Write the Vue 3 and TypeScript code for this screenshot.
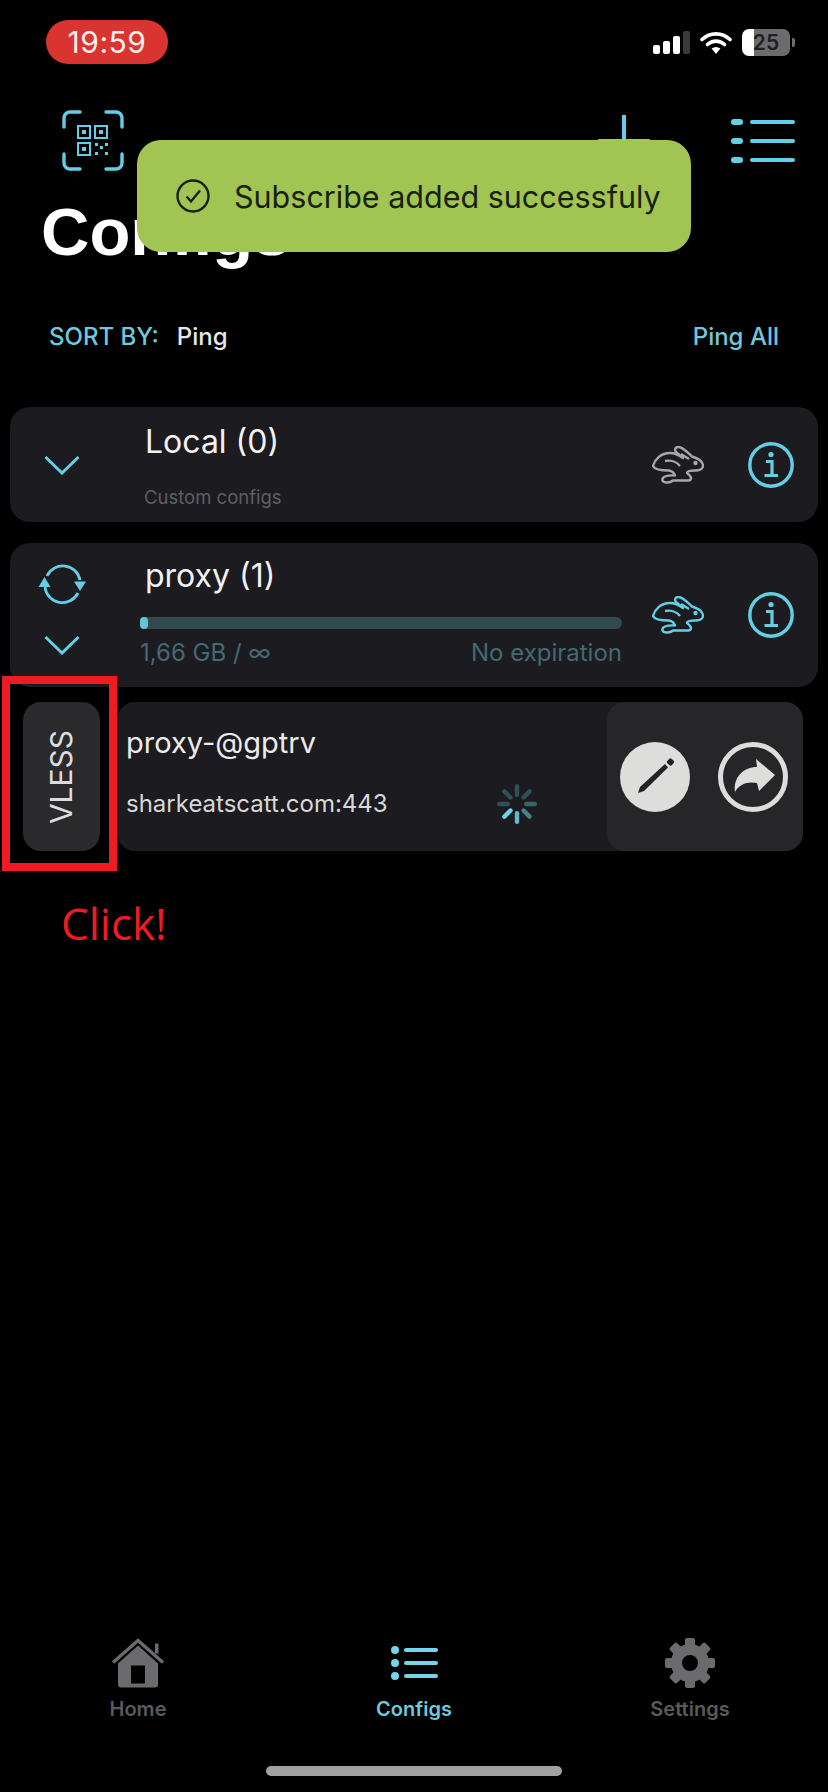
<script setup lang="ts">
const spinnerTicks = [
  { angle: 0, color: '#2f5058' },
  { angle: 45, color: '#2f5058' },
  { angle: 90, color: '#3a626b' },
  { angle: 135, color: '#4a7f8b' },
  { angle: 180, color: '#62b9cc' },
  { angle: 225, color: '#6fd3e8' },
  { angle: 270, color: '#2f5058' },
  { angle: 315, color: '#2f5058' },
];

const gearTeeth = [0, 45, 90, 135, 180, 225, 270, 315];

const rabbitPath =
  'M1 20C3 13 9 7 18 7 23 7 27 9 31 12L24.5 6.5C22 4 23 1 26.5 1 31 1 36 7 40 10.5 45 12 51 15 51 20 51 23 47 24.5 43 24.5 39 24.5 35 25 35 27 37 29 39 30 39 32 39 34 38 34.5 36 34.5L21 34.5C18 37 12 37.5 10.5 34.5 9.5 31 14 29 23 29.5 22 27 20 25 17 24.5 10 24.5 3 24 1 20Z';
</script>

<template>
  <div class="screen">
    <div class="status">
      <div class="time">19:59</div>
      <div class="status-icons">
        <svg width="37" height="23" viewBox="0 0 37 23">
          <rect x="0" y="14" width="7" height="9" rx="2" fill="#fff" />
          <rect x="10" y="10" width="7" height="13" rx="2" fill="#fff" />
          <rect x="20" y="5" width="7" height="18" rx="2" fill="#fff" />
          <rect x="30" y="0" width="7" height="23" rx="2" fill="#3a3a3c" />
        </svg>
        <svg class="wifi" width="32" height="23" viewBox="0 0 32 23">
          <path d="M2 8.5C10 1 22 1 30 8.5" fill="none" stroke="#fff" stroke-width="3.6" stroke-linecap="round" />
          <path d="M7.5 13.5C12.5 9 19.5 9 24.5 13.5" fill="none" stroke="#fff" stroke-width="3.6" stroke-linecap="round" />
          <path d="M11.5 17.5Q16 14.5 20.5 17.5L16 23Z" fill="#fff" />
        </svg>
        <div class="battery"><span>25</span></div>
        <div class="battery-nub"></div>
      </div>
    </div>

    <div class="toolbar">
      <svg width="62" height="61" viewBox="0 0 62 61" fill="none">
        <g stroke="#63cfe6" stroke-width="3.4" stroke-linecap="round">
          <path d="M2 17V8a6 6 0 0 1 6-6h10" />
          <path d="M44 2h10a6 6 0 0 1 6 6v9" />
          <path d="M2 44v9a6 6 0 0 0 6 6h10" />
          <path d="M60 44v9a6 6 0 0 1-6 6H44" />
        </g>
        <g stroke="#63cfe6" stroke-width="2">
          <rect x="16" y="16" width="12" height="12" />
          <rect x="33" y="16" width="12" height="12" />
          <rect x="16" y="33" width="12" height="12" />
        </g>
        <g fill="#63cfe6">
          <rect x="20" y="20" width="4" height="4" />
          <rect x="37" y="20" width="4" height="4" />
          <rect x="20" y="37" width="4" height="4" />
          <rect x="33" y="33" width="3" height="3" />
          <rect x="38" y="36" width="3" height="3" />
          <rect x="43" y="33" width="3" height="3" />
          <rect x="33" y="42" width="3" height="3" />
          <rect x="43" y="42" width="3" height="3" />
        </g>
      </svg>
      <svg class="plus" width="52" height="52" viewBox="0 0 52 52">
        <path d="M26 1V51M1 26H51" stroke="#63cfe6" stroke-width="4" stroke-linecap="round" />
      </svg>
      <svg width="64" height="44" viewBox="0 0 64 44">
        <g fill="#63cfe6">
          <rect x="0" y="0" width="12" height="6" rx="3" />
          <rect x="0" y="19" width="12" height="6" rx="3" />
          <rect x="0" y="38" width="12" height="6" rx="3" />
          <rect x="19" y="1" width="45" height="4" rx="2" />
          <rect x="19" y="20" width="45" height="4" rx="2" />
          <rect x="19" y="39" width="45" height="4" rx="2" />
        </g>
      </svg>
    </div>

    <h1 class="title">Configs</h1>

    <div class="sort">
      <span class="sort-label">SORT BY:</span>
      <span class="sort-value">Ping</span>
      <span class="ping-all">Ping All</span>
    </div>

    <div class="list">
      <section class="card card-local">
        <div class="card-left">
          <svg width="36" height="20" viewBox="0 0 36 20">
            <path d="M1.5 2 18 18 34.5 2" fill="none" stroke="#63cfe6" stroke-width="3" />
          </svg>
        </div>
        <div class="card-main">
          <div class="card-title">Local (0)</div>
          <div class="card-sub">Custom configs</div>
        </div>
        <svg class="rabbit" width="52" height="38" viewBox="0 0 52 38" fill="none" stroke="#a9a7a7" stroke-width="2.4" stroke-linejoin="round">
          <path :d="rabbitPath" />
          <path d="M29 8 37 13" />
          <path d="M13 15C19 14 25 16 28 20" />
          <circle cx="43.5" cy="17" r="1" fill="#a9a7a7" />
        </svg>
        <svg class="info" width="46" height="46" viewBox="0 0 46 46" fill="none">
          <circle cx="23" cy="23" r="21.2" stroke="#63cfe6" stroke-width="3.4" />
          <circle cx="23" cy="12.5" r="2.6" fill="#63cfe6" />
          <path d="M18 19.5H24V33M16.5 33.5H30" stroke="#63cfe6" stroke-width="3.2" />
        </svg>
      </section>

      <section class="card card-proxy">
        <div class="card-left card-left-stack">
          <svg width="48" height="41" viewBox="0 0 48 41" fill="none">
            <path d="M9 13A17.5 17.5 0 0 1 42 17" stroke="#63cfe6" stroke-width="2.8" />
            <path d="M40 30A17.5 17.5 0 0 1 7 24" stroke="#63cfe6" stroke-width="2.8" />
            <path d="M0.5 24 6.5 14 12.5 24Z" fill="#63cfe6" />
            <path d="M36 18.5H48L42 28Z" fill="#63cfe6" />
          </svg>
          <svg width="36" height="20" viewBox="0 0 36 20">
            <path d="M1.5 2 18 18 34.5 2" fill="none" stroke="#63cfe6" stroke-width="3" />
          </svg>
        </div>
        <div class="card-main card-main-proxy">
          <div class="card-title">proxy (1)</div>
          <div class="bar"><div class="bar-fill"></div></div>
          <div class="usage">
            <span>1,66 GB / ∞</span>
            <span>No expiration</span>
          </div>
        </div>
        <svg class="rabbit" width="52" height="38" viewBox="0 0 52 38" fill="none" stroke="#63cfe6" stroke-width="2.4" stroke-linejoin="round">
          <path :d="rabbitPath" />
          <path d="M29 8 37 13" />
          <path d="M13 15C19 14 25 16 28 20" />
          <circle cx="43.5" cy="17" r="1" fill="#63cfe6" />
        </svg>
        <svg class="info" width="46" height="46" viewBox="0 0 46 46" fill="none">
          <circle cx="23" cy="23" r="21.2" stroke="#63cfe6" stroke-width="3.4" />
          <circle cx="23" cy="12.5" r="2.6" fill="#63cfe6" />
          <path d="M18 19.5H24V33M16.5 33.5H30" stroke="#63cfe6" stroke-width="3.2" />
        </svg>
      </section>

      <div class="config-row">
        <div class="protocol"><span>VLESS</span></div>
        <div class="config">
          <div class="config-info">
            <div class="config-name">proxy-@gptrv</div>
            <div class="config-addr">
              <span>sharkeatscatt.com:443</span>
              <svg width="40" height="40" viewBox="0 0 40 40">
                <rect
                  v-for="tick in spinnerTicks"
                  :key="tick.angle"
                  x="17.8"
                  y="0"
                  width="4.4"
                  height="13"
                  rx="2.2"
                  :fill="tick.color"
                  :transform="`rotate(${tick.angle} 20 20)`"
                />
              </svg>
            </div>
          </div>
          <div class="actions">
            <svg width="70" height="70" viewBox="0 0 70 70">
              <circle cx="35" cy="35" r="35" fill="#dddddb" />
              <path d="M18 51 20 45 45 22 48 25.5 24 49Z" fill="#222124" />
              <rect x="47.5" y="17" width="6" height="6" rx="1.5" fill="#222124" transform="rotate(43 50.5 20)" />
            </svg>
            <svg width="70" height="70" viewBox="0 0 70 70">
              <circle cx="35" cy="35" r="32.5" fill="none" stroke="#dddddb" stroke-width="5" />
              <path d="M38 17 57 33 41 49 39 41C30 39 21 42 17 50 15 37 24 25 39 25Z" fill="#dddddb" />
            </svg>
          </div>
        </div>
      </div>
    </div>

    <nav class="tabs">
      <div class="tab">
        <svg width="54" height="49" viewBox="0 0 54 49">
          <path d="M2 24 27 2 52 24" fill="none" stroke="#6b6a6d" stroke-width="3.4" />
          <rect x="44" y="5" width="3.5" height="10" fill="#6b6a6d" />
          <path d="M7 25 27 7 47 25V46a3 3 0 0 1-3 3H10a3 3 0 0 1-3-3Z" fill="#6b6a6d" />
          <rect x="20" y="27" width="14" height="18" fill="#000" />
        </svg>
        <span>Home</span>
      </div>
      <div class="tab tab-active">
        <svg width="47" height="34" viewBox="0 0 47 34">
          <g fill="#74d5ea">
            <circle cx="4" cy="4" r="4" />
            <circle cx="4" cy="17" r="4" />
            <circle cx="4" cy="30" r="4" />
            <rect x="13" y="2" width="34" height="4" rx="2" />
            <rect x="13" y="15" width="34" height="4" rx="2" />
            <rect x="13" y="28" width="34" height="4" rx="2" />
          </g>
        </svg>
        <span>Configs</span>
      </div>
      <div class="tab">
        <svg width="50" height="50" viewBox="0 0 50 50">
          <rect
            v-for="angle in gearTeeth"
            :key="angle"
            x="20"
            y="0"
            width="10"
            height="12"
            rx="2"
            fill="#6b6a6d"
            :transform="`rotate(${angle} 25 25)`"
          />
          <circle cx="25" cy="25" r="13.5" fill="none" stroke="#6b6a6d" stroke-width="11" />
        </svg>
        <span>Settings</span>
      </div>
    </nav>
    <div class="home-indicator"></div>

    <div class="toast">
      <svg width="34" height="34" viewBox="0 0 34 34" fill="none" stroke="#17220e" stroke-width="2.4">
        <circle cx="17" cy="17" r="15.5" />
        <path d="M10.5 17.5 15 22.5 24 11.5" />
      </svg>
      <span>Subscribe added successfuly</span>
    </div>

    <div class="click-box"></div>
    <div class="click-label">Click!</div>
  </div>
</template>

<style scoped>
.screen {
  position: relative;
  width: 828px;
  height: 1792px;
  background: #000;
  display: flex;
  flex-direction: column;
  overflow: hidden;
  font-family: Inter, "Liberation Sans", sans-serif;
  color: #fff;
}

.status {
  display: flex;
  justify-content: space-between;
  align-items: center;
  padding: 20px 33px 0 46px;
}

.time {
  width: 122px;
  height: 44px;
  border-radius: 22px;
  background: #d9342f;
  text-align: center;
  font-size: 30px;
  letter-spacing: 0.5px;
  line-height: 44px;
  font-weight: 400;
  color: #fbeeee;
}

.status-icons {
  display: flex;
  align-items: center;
}

.wifi {
  margin-left: 10px;
}

.battery {
  width: 48px;
  height: 27px;
  margin-left: 10px;
  border-radius: 7px;
  background: linear-gradient(to right, #fff 24%, #6c6c6e 24%);
  color: #202020;
  font-size: 21px;
  font-weight: 600;
  line-height: 27px;
  text-align: center;
}

.battery-nub {
  width: 3px;
  height: 9px;
  margin-left: 2px;
  border-radius: 0 2px 2px 0;
  background: #6c6c6e;
}

.toolbar {
  display: flex;
  align-items: center;
  margin-top: 46px;
  padding: 0 33px 0 62px;
}

.plus {
  margin-left: auto;
  margin-right: 81px;
}

.title {
  margin: 26px 0 0;
  padding-left: 41px;
  font-family: "Liberation Sans", Arial, sans-serif;
  font-size: 67px;
  line-height: 70px;
  font-weight: 700;
}

.sort {
  display: flex;
  align-items: center;
  margin-top: 56px;
  padding: 0 49px;
  font-size: 24px;
  line-height: 28px;
  font-weight: 500;
}

.sort-label {
  color: #6fc9dc;
}

.sort-value {
  margin-left: 18px;
  color: #e8e8e8;
}

.ping-all {
  margin-left: auto;
  color: #6fc9dc;
}

.list {
  display: flex;
  flex-direction: column;
  margin-top: 56px;
  padding: 0 10px;
}

.card {
  display: flex;
  align-items: center;
  border-radius: 20px;
  background: #1c1b1f;
}

.card-local {
  height: 115px;
}

.card-proxy {
  height: 144px;
  margin-top: 21px;
}

.card-left {
  width: 104px;
  flex-shrink: 0;
  display: flex;
  justify-content: center;
}

.card-left-stack {
  flex-direction: column;
  align-items: center;
  gap: 31px;
  padding-bottom: 13px;
}

.card-main {
  width: 482px;
  margin-left: 26px;
  flex-shrink: 0;
}

.card-main-proxy {
  padding-bottom: 6px;
}

.card-title {
  padding-left: 5px;
  font-size: 32px;
  line-height: 40px;
  color: #f2f2f2;
}

.card-sub {
  margin-top: 24px;
  padding-left: 4px;
  font-size: 18.5px;
  line-height: 22px;
  color: #5f5f62;
}

.bar {
  height: 12px;
  margin-top: 21px;
  border-radius: 6px;
  background: #32494f;
}

.bar-fill {
  width: 8px;
  height: 12px;
  border-radius: 4px;
  background: #63c5d8;
}

.usage {
  display: flex;
  justify-content: space-between;
  margin-top: 9px;
  font-size: 24px;
  line-height: 30px;
  color: #436a73;
}

.rabbit {
  margin-left: 30px;
  flex-shrink: 0;
}

.info {
  margin-left: 44px;
  flex-shrink: 0;
}

.config-row {
  display: flex;
  gap: 17px;
  height: 149px;
  margin-top: 15px;
  padding: 0 15px 0 13px;
}

.protocol {
  width: 77px;
  flex-shrink: 0;
  border-radius: 18px;
  background: #2a292c;
  display: flex;
  align-items: center;
  justify-content: center;
}

.protocol span {
  transform: rotate(-90deg);
  font-size: 30px;
  line-height: 36px;
  font-weight: 400;
  color: #dcdcdc;
}

.config {
  flex: 1;
  display: flex;
  border-radius: 18px;
  background: #1c1b1f;
}

.config-info {
  flex: 1;
  padding: 23px 0 0 9px;
}

.config-name {
  font-size: 29px;
  line-height: 36px;
  color: #ececec;
}

.config-addr {
  display: flex;
  align-items: center;
  margin-top: 23px;
  font-size: 24px;
  line-height: 30px;
  color: #d8d8d8;
}

.config-addr span {
  width: 371px;
}

.actions {
  width: 196px;
  flex-shrink: 0;
  display: flex;
  align-items: center;
  gap: 28px;
  padding-left: 13px;
  box-sizing: border-box;
  border-radius: 18px;
  background: #262528;
}

.tabs {
  display: flex;
  margin-top: auto;
}

.tab {
  width: 276px;
  height: 83px;
  display: flex;
  flex-direction: column;
  align-items: center;
  font-size: 20px;
  font-weight: 600;
  color: #5a595c;
}

.tab svg {
  height: 50px;
  flex-shrink: 0;
}

.tab span {
  margin-top: 9px;
  line-height: 24px;
}

.tab-active {
  color: #6fc9dc;
}

.home-indicator {
  width: 296px;
  height: 10px;
  margin: 45px auto 16px;
  border-radius: 5px;
  background: #a0a0a0;
}

.toast {
  position: absolute;
  top: 140px;
  left: 137px;
  width: 554px;
  height: 112px;
  box-sizing: border-box;
  padding-left: 39px;
  display: flex;
  align-items: center;
  gap: 24px;
  border-radius: 24px;
  background: #a2c452;
  color: #17220e;
  font-size: 30.5px;
}

.click-box {
  position: absolute;
  top: 676px;
  left: 2px;
  width: 115px;
  height: 195px;
  box-sizing: border-box;
  border: 8px solid #ed1c24;
}

.click-label {
  position: absolute;
  top: 894px;
  left: 61px;
  font-family: "Open Sans", sans-serif;
  font-size: 44px;
  line-height: 58px;
  color: #ed1c24;
}
</style>

<style>
html,
body {
  margin: 0;
  background: #000;
}
</style>
